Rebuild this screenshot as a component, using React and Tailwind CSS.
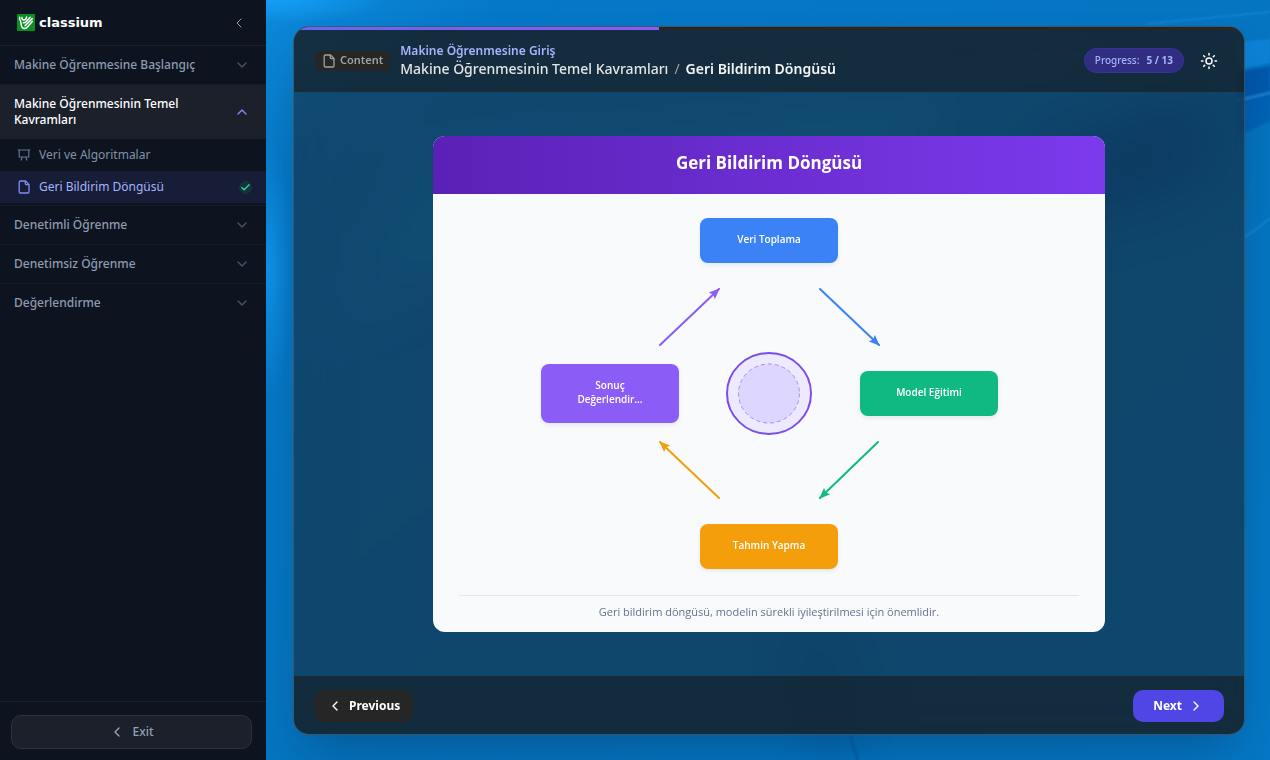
import React, { useState } from "react";
import { Check, ChevronDown, ChevronLeft, ChevronRight, ChevronUp, Sun } from "lucide-react";

const modules = [
  { id: 1, title: "Makine Öğrenmesine Başlangıç", lessons: [] },
  {
    id: 2,
    title: "Makine Öğrenmesinin Temel Kavramları",
    lessons: [
      { id: 21, title: "Veri ve Algoritmalar", type: "slides" },
      { id: 22, title: "Geri Bildirim Döngüsü", type: "content", done: true },
    ],
  },
  { id: 3, title: "Denetimli Öğrenme", lessons: [] },
  { id: 4, title: "Denetimsiz Öğrenme", lessons: [] },
  { id: 5, title: "Değerlendirme", lessons: [] },
];

const nodes = [
  { label: "Veri Toplama", className: "left-[267px] top-[24px] h-[45px] bg-[#3b82f6]" },
  { label: "Model Eğitimi", className: "left-[427px] top-[177px] h-[45px] bg-[#10b981]" },
  { label: "Tahmin Yapma", className: "left-[267px] top-[330px] h-[45px] bg-[#f59e0b]" },
  { label: "Sonuç Değerlendir...", className: "left-[108px] top-[170px] h-[59px] bg-[#8b5cf6]" },
];

const arrows = [
  { id: "blue", color: "#3b82f6", x1: 387, y1: 95, x2: 446, y2: 151 },
  { id: "green", color: "#10b981", x1: 445, y1: 248, x2: 387, y2: 304 },
  { id: "orange", color: "#f59e0b", x1: 286, y1: 304, x2: 227, y2: 248 },
  { id: "purple", color: "#8b5cf6", x1: 227, y1: 151, x2: 286, y2: 95 },
];

function Logo() {
  return (
    <div className="flex items-center gap-1">
      <svg viewBox="0 0 18 17" className="h-[17px] w-[18px]" fill="none" aria-hidden="true">
        <rect width="18" height="17" rx="1" fill="#0a8f24" />
        <g stroke="#fff" strokeWidth="1.5" strokeLinecap="round" strokeLinejoin="round">
          <path d="M2.600 3.200c-.5 2 .8 3.200 1.200 4.600.4 1.800 0 4 1.400 5.600 1.400 1.600 3.800 1.200 5-.2l5-5.800" />
          <path d="M5 3.600c-.2 1.400.6 2.400 1.800 2.400 1.400 0 2.600-1.200 2.800-3" />
          <path d="M6.400 8.800c1.600.2 2.400-.6 3.200-1.600l3.600-4" />
          <path d="M8 11.800 15.200 4.600" />
        </g>
      </svg>
      <span className="font-['DejaVu_Sans',sans-serif] text-[13px] leading-4 font-bold text-white">classium</span>
    </div>
  );
}

function BoardIcon() {
  return (
    <svg viewBox="0 0 14 14" className="h-[14px] w-[14px] shrink-0" fill="none" stroke="currentColor" strokeWidth="1.2" aria-hidden="true">
      <path d="M.8 2h12.400M2.200 2v7h9.600V2M5.400 9 4 12.500M8.600 9 10 12.500" />
    </svg>
  );
}

function DocIcon() {
  return (
    <svg
      viewBox="0 0 14 14"
      className="h-[14px] w-[14px] shrink-0"
      fill="none"
      stroke="currentColor"
      strokeWidth="1.3"
      strokeLinejoin="round"
      aria-hidden="true"
    >
      <path d="M8.500 1H3.500A1.300 1.300 0 0 0 2.200 2.300v9.400A1.300 1.300 0 0 0 3.500 13h7.200a1.300 1.300 0 0 0 1.300-1.300V4.500z" />
      <path d="M8.300 1v2.500a1.200 1.200 0 0 0 1.200 1.200H12" />
    </svg>
  );
}

function Wallpaper() {
  return (
    <svg
      className="absolute inset-0 h-full w-full"
      viewBox="0 0 1004 760"
      preserveAspectRatio="none"
      aria-hidden="true"
    >
      <defs>
        <linearGradient id="sky" x1="0" y1="0" x2="1" y2="1">
          <stop offset="0" stopColor="#0c8ada" />
          <stop offset="0.12" stopColor="#0678c8" />
          <stop offset="0.6" stopColor="#0574c0" />
          <stop offset="1" stopColor="#0577c6" />
        </linearGradient>
        <radialGradient id="glow">
          <stop offset="0" stopColor="#16a4ff" />
          <stop offset="1" stopColor="#16a4ff" stopOpacity="0" />
        </radialGradient>
        <filter id="soft" x="-50%" y="-50%" width="200%" height="200%">
          <feGaussianBlur stdDeviation="22" />
        </filter>
        <filter id="edge">
          <feGaussianBlur stdDeviation="1" />
        </filter>
      </defs>
      <rect width="1004" height="760" fill="url(#sky)" />
      <ellipse cx="10" cy="0" rx="110" ry="24" fill="url(#glow)" opacity="0.8" />
      <ellipse cx="2" cy="270" rx="26" ry="130" fill="url(#glow)" opacity="0.6" />
      <path d="M60 330 180 170 700 90 640 160 220 240z" fill="#1496e6" opacity="0.4" filter="url(#soft)" />
      <path d="M760 160 940 90v90L810 220z" fill="#004a98" opacity="0.55" filter="url(#soft)" />
      <path d="M520 620 580 640 590 760h-50z" fill="#00468f" opacity="0.25" filter="url(#soft)" />
      <g filter="url(#edge)" fill="none">
        <path d="M880 24 1004 12" stroke="#1183d4" strokeWidth="2" />
        <path d="M970 42 1004 39v24l-34 7z" fill="#0a82d6" />
        <path d="M970 72 1004 66v34l-34 8z" fill="#0059ae" />
        <path d="M970 101 1004 93" stroke="#1a7fcd" strokeWidth="3" />
        <path d="M970 104 1004 97v24l-34 16z" fill="#0062b6" />
        <path d="M970 242c14-8 24-14 34-24" stroke="#0a80d2" strokeWidth="3" />
        <path d="M584 736 592 760" stroke="#075fa8" strokeWidth="2" />
      </g>
    </svg>
  );
}

function Sidebar() {
  const [openId, setOpenId] = useState(2);
  const [activeId, setActiveId] = useState(22);

  return (
    <aside className="flex w-[266px] shrink-0 flex-col bg-[#0d1420]">
      <div className="flex h-[46px] items-center justify-between border-b border-[#1b212d] pr-[19px] pl-[17px]">
        <Logo />
        <button aria-label="Collapse sidebar" className="text-slate-400">
          <ChevronLeft size={16} strokeWidth={1.5} />
        </button>
      </div>

      <nav className="flex-1">
        {modules.map((m) => {
          const open = m.id === openId;
          return (
            <div key={m.id} className="border-b border-[#161c28] last:border-b-0">
              <button
                onClick={() => setOpenId(open ? null : m.id)}
                aria-expanded={open}
                className={
                  open
                    ? "flex w-full items-center justify-between bg-[#1b202b] py-[11px] pr-4 pl-[14px] text-left text-[12px] leading-4 font-medium text-white"
                    : "flex w-full items-center justify-between py-[11px] pr-4 pl-[14px] text-left text-[12px] leading-4 font-medium text-[#8f9cb0]"
                }
              >
                <span className="max-w-[190px]">{m.title}</span>
                {open ? (
                  <ChevronUp size={16} strokeWidth={2} className="text-[#818cf8]" />
                ) : (
                  <ChevronDown size={16} strokeWidth={2} className="text-slate-600" />
                )}
              </button>

              {open && m.lessons.length > 0 && (
                <ul className="pb-0.5">
                  {m.lessons.map((l) => (
                    <li key={l.id}>
                      <button
                        onClick={() => setActiveId(l.id)}
                        className={
                          l.id === activeId
                            ? "flex h-8 w-full items-center gap-2 bg-[#171c37] pr-[14px] pl-[17px] text-[12px] leading-4 text-[#a5b4fc]"
                            : "flex h-8 w-full items-center gap-2 pr-[14px] pl-[17px] text-[12px] leading-4 text-[#8290a6]"
                        }
                      >
                        <span className={l.id === activeId ? "text-[#818cf8]" : "text-slate-500"}>
                          {l.type === "slides" ? <BoardIcon /> : <DocIcon />}
                        </span>
                        <span className="flex-1 text-left">{l.title}</span>
                        {l.done && (
                          <span className="flex h-[13px] w-[13px] items-center justify-center rounded-full bg-[#14333c] text-[#34d399]">
                            <Check size={11} strokeWidth={3} />
                          </span>
                        )}
                      </button>
                    </li>
                  ))}
                </ul>
              )}
            </div>
          );
        })}
      </nav>

      <div className="border-t border-[#1b212d] pt-[13px] pr-[14px] pb-[11px] pl-[11px]">
        <button className="flex h-[34px] w-full items-center justify-center gap-[7px] rounded-[10px] border border-[#2b313d] bg-[#1b202b] text-[12px] leading-4 font-medium text-slate-400">
          <ChevronLeft size={16} strokeWidth={2} />
          Exit
        </button>
      </div>
    </aside>
  );
}

function CycleDiagram() {
  return (
    <div className="relative mx-auto h-[401px] w-[672px]">
      <svg viewBox="0 0 672 401" className="h-full w-full" fill="none" aria-hidden="true">
        <defs>
          {arrows.map((a) => (
            <marker
              key={a.id}
              id={`head-${a.id}`}
              markerUnits="userSpaceOnUse"
              markerWidth="11"
              markerHeight="10"
              refX="10"
              refY="5"
              orient="auto"
            >
              <path d="M0 .5 11 5 0 9.500 2 5z" fill={a.color} />
            </marker>
          ))}
        </defs>
        {arrows.map((a) => (
          <line
            key={a.id}
            x1={a.x1}
            y1={a.y1}
            x2={a.x2}
            y2={a.y2}
            stroke={a.color}
            strokeWidth="2"
            strokeLinecap="round"
            markerEnd={`url(#head-${a.id})`}
          />
        ))}
        <ellipse cx="336" cy="199.500" rx="42" ry="40.500" fill="#ede9fe" stroke="#7c4dea" strokeWidth="2" />
        <ellipse cx="336" cy="199.500" rx="30.500" ry="29.500" fill="#ddd6fe" stroke="#a78bfa" strokeDasharray="4 3" />
      </svg>

      {nodes.map((n) => (
        <div
          key={n.label}
          className={`absolute flex w-[138px] items-center justify-center rounded-lg px-6 pb-1 text-center text-[10px] leading-[14px] font-semibold text-white shadow-[0_2px_4px_rgba(0,0,0,0.08)] ${n.className}`}
        >
          {n.label}
        </div>
      ))}
    </div>
  );
}

function Slide() {
  return (
    <article className="w-[672px] overflow-hidden rounded-xl bg-slate-50 font-['Open_Sans','Noto_Sans',sans-serif]">
      <h2 className="h-[58px] bg-linear-to-r from-[#5b21b6] to-[#7c3aed] pt-[15px] text-center text-[17px] leading-6 font-bold text-white">
        Geri Bildirim Döngüsü
      </h2>
      <CycleDiagram />
      <p className="mx-[26px] border-t border-slate-200 pt-2 pb-3 text-center text-[11px] leading-4 text-slate-500">
        Geri bildirim döngüsü, modelin sürekli iyileştirilmesi için önemlidir.
      </p>
    </article>
  );
}

export default function App() {
  const current = 5;
  const total = 13;

  return (
    <div className="flex min-h-screen font-['Noto_Sans',sans-serif]">
      <Sidebar />

      <main className="relative flex flex-1 overflow-hidden pt-[26px] pr-[25px] pb-[25px] pl-[27px]">
        <Wallpaper />

        <section className="relative flex flex-1 flex-col overflow-hidden rounded-2xl border border-neutral-500/40 bg-neutral-900/50 shadow-2xl backdrop-blur-xl">
          {/* course progress */}
          <div className="h-[3px] bg-neutral-800">
            <div
              className="h-full bg-linear-to-r from-[#6366f1] to-[#8b5cf6]"
              style={{ width: `${(current / total) * 100}%` }}
            />
          </div>

          <header className="flex h-[62px] items-center border-b border-neutral-800/60 bg-neutral-900/55 px-[21px]">
            <span className="flex h-5 items-center gap-1 rounded-md bg-neutral-800 px-[7px] text-[11px] font-semibold text-neutral-400">
              <DocIcon />
              Content
            </span>
            <div className="ml-[10px] flex-1 pb-0.5">
              <p className="text-[12px] leading-[18px] font-semibold text-[#a5b4fc]">Makine Öğrenmesine Giriş</p>
              <h1 className="flex gap-[6px] text-[14px] leading-[18px] font-medium text-neutral-200">
                Makine Öğrenmesinin Temel Kavramları
                <span className="font-normal text-neutral-400">/</span>
                <span className="font-semibold text-neutral-100">Geri Bildirim Döngüsü</span>
              </h1>
            </div>
            <div className="flex h-[25px] items-center gap-[7px] rounded-full border border-[#3730a3] bg-[#312e81] px-[10px] text-[10px] font-medium text-[#a5b4fc]">
              <span>Progress:</span>
              <span className="font-bold">
                {current} / {total}
              </span>
            </div>
            <button aria-label="Toggle theme" className="mr-[5px] ml-4 text-white">
              <Sun size={18} strokeWidth={2} />
            </button>
          </header>

          <div className="flex flex-1 items-center justify-center px-6 py-10">
            <Slide />
          </div>

          <footer className="flex h-[58px] items-center justify-between border-t border-neutral-800/60 bg-neutral-900/55 px-5">
            <button className="flex h-8 items-center gap-[6px] rounded-[10px] bg-neutral-800 px-[13px] text-[12px] font-bold text-white">
              <ChevronLeft size={16} />
              Previous
            </button>
            <button className="flex h-8 items-center gap-[6px] rounded-[10px] bg-[#4f46e5] px-5 text-[12px] font-bold text-white">
              Next
              <ChevronRight size={16} />
            </button>
          </footer>
        </section>
      </main>
    </div>
  );
}
